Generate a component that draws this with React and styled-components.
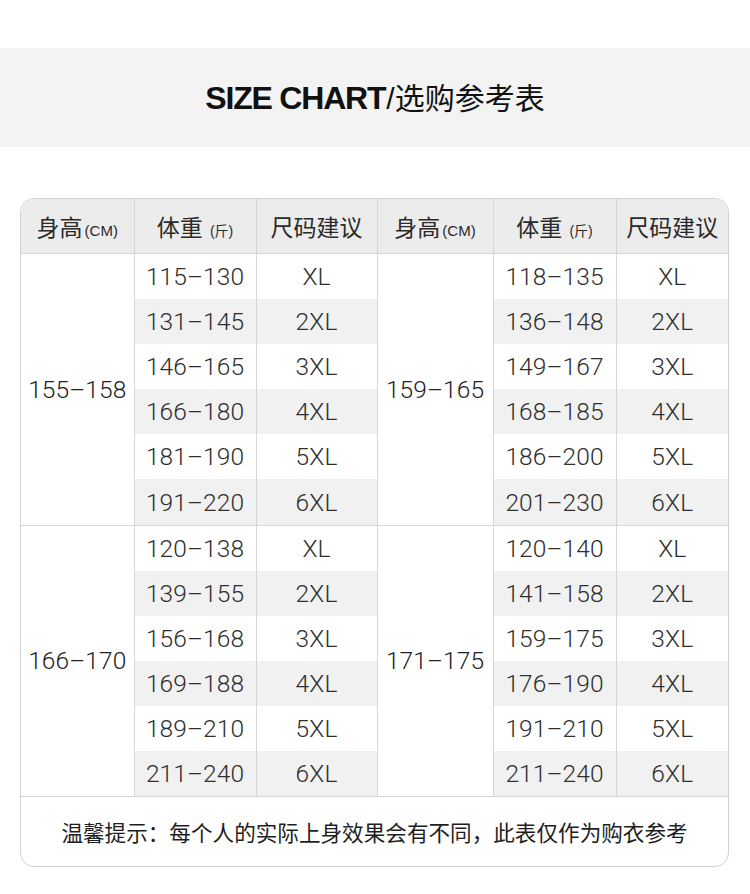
import React from "react";
import styled, { createGlobalStyle } from "styled-components";

const groups = [
  {
    left: {
      height: "155–158",
      rows: [
        ["115–130", "XL"],
        ["131–145", "2XL"],
        ["146–165", "3XL"],
        ["166–180", "4XL"],
        ["181–190", "5XL"],
        ["191–220", "6XL"],
      ],
    },
    right: {
      height: "159–165",
      rows: [
        ["118–135", "XL"],
        ["136–148", "2XL"],
        ["149–167", "3XL"],
        ["168–185", "4XL"],
        ["186–200", "5XL"],
        ["201–230", "6XL"],
      ],
    },
  },
  {
    left: {
      height: "166–170",
      rows: [
        ["120–138", "XL"],
        ["139–155", "2XL"],
        ["156–168", "3XL"],
        ["169–188", "4XL"],
        ["189–210", "5XL"],
        ["211–240", "6XL"],
      ],
    },
    right: {
      height: "171–175",
      rows: [
        ["120–140", "XL"],
        ["141–158", "2XL"],
        ["159–175", "3XL"],
        ["176–190", "4XL"],
        ["191–210", "5XL"],
        ["211–240", "6XL"],
      ],
    },
  },
];

const colWidths = [113, 122, 121, 116, 123, 112];

export default function App() {
  return (
    <Page>
      <GlobalStyle />
      <Banner>
        <Title>
          <strong>SIZE CHART</strong>
          <span>/选购参考表</span>
        </Title>
      </Banner>

      <Card>
        <Table>
          <colgroup>
            {colWidths.map((w, i) => (
              <col key={i} style={{ width: w }} />
            ))}
          </colgroup>
          <thead>
            <tr>
              {[0, 1].map(side => (
                <React.Fragment key={side}>
                  <Th>
                    身高<Unit>(CM)</Unit>
                  </Th>
                  <Th>
                    体重 <Unit $small>(斤)</Unit>
                  </Th>
                  <Th>尺码建议</Th>
                </React.Fragment>
              ))}
            </tr>
          </thead>
          {groups.map((g, gi) => (
            <Group key={gi}>
              {g.left.rows.map((row, ri) => (
                <tr key={ri}>
                  {ri === 0 && <HeightCell rowSpan={6}>{g.left.height}</HeightCell>}
                  <Td $striped={ri % 2 === 1}>{row[0]}</Td>
                  <Td $striped={ri % 2 === 1}>{row[1]}</Td>
                  {ri === 0 && <HeightCell rowSpan={6}>{g.right.height}</HeightCell>}
                  <Td $striped={ri % 2 === 1}>{g.right.rows[ri][0]}</Td>
                  <Td $striped={ri % 2 === 1} $last>
                    {g.right.rows[ri][1]}
                  </Td>
                </tr>
              ))}
            </Group>
          ))}
        </Table>
        <Note>温馨提示：每个人的实际上身效果会有不同，此表仅作为购衣参考</Note>
      </Card>
    </Page>
  );
}

const GlobalStyle = createGlobalStyle`
  html, body {
    margin: 0;
    padding: 0;
    background: #fff;
  }
  body {
    font-family: "Liberation Sans", "Noto Sans CJK SC", sans-serif;
  }
`;

const Page = styled.div`
  width: 750px;
  height: 894px;
  padding-top: 48px;
  box-sizing: border-box;
  background: #fff;
`;

const Banner = styled.div`
  height: 99px;
  background: #f3f3f3;
  display: flex;
  align-items: center;
  justify-content: center;
`;

const Title = styled.h1`
  margin: 0;
  font-size: 32px;
  line-height: 1;
  color: #111;
  display: flex;
  align-items: baseline;

  strong {
    font-family: "Liberation Sans", sans-serif;
    font-weight: 700;
    letter-spacing: -1.2px;
  }

  span {
    font-family: "Liberation Sans", "Noto Sans CJK SC", sans-serif;
    font-weight: 400;
    font-size: 30px;
    margin-left: 1px;
  }
`;

const Card = styled.div`
  margin: 51px 0 0 20px;
  width: 709px;
  border: 1px solid #d2d2d2;
  border-radius: 14px;
  overflow: hidden;
  box-sizing: border-box;
  background: #fff;
`;

const Table = styled.table`
  width: 100%;
  border-collapse: collapse;
  table-layout: fixed;
`;

const Th = styled.th`
  height: 54px;
  padding: 0;
  background: #ececec;
  border-right: 1px solid #d6d6d6;
  border-bottom: 1px solid #d6d6d6;
  font-family: "Noto Sans CJK SC", sans-serif;
  font-weight: 400;
  font-size: 23px;
  color: #2a2a2a;
  text-align: center;
  white-space: nowrap;

  &:last-child {
    border-right: none;
  }
`;

const Unit = styled.span`
  font-family: "Liberation Sans", "Noto Sans CJK SC", sans-serif;
  font-size: ${p => (p.$small ? "14px" : "15px")};
  margin-left: 2px;
`;

const Group = styled.tbody`
  border-bottom: 1px solid #d6d6d6;
`;

const Td = styled.td`
  height: 45.1px;
  padding: 0;
  background: ${p => (p.$striped ? "#f1f1f1" : "#fff")};
  border-right: ${p => (p.$last ? "none" : "1px solid #d6d6d6")};
  font-family: Roboto, "Liberation Sans", sans-serif;
  font-weight: 300;
  font-size: 24.5px;
  letter-spacing: 0.1px;
  color: #2e2e2e;
  text-align: center;
`;

const HeightCell = styled.td`
  padding: 0;
  background: #fff;
  border-right: 1px solid #d6d6d6;
  font-family: Roboto, "Liberation Sans", sans-serif;
  font-weight: 300;
  font-size: 24.5px;
  letter-spacing: 0.1px;
  color: #222;
  text-align: center;
`;

const Note = styled.div`
  height: 69px;
  display: flex;
  align-items: center;
  justify-content: center;
  font-family: "Noto Sans CJK SC", sans-serif;
  font-size: 21.6px;
  color: #1e1e1e;
`;
